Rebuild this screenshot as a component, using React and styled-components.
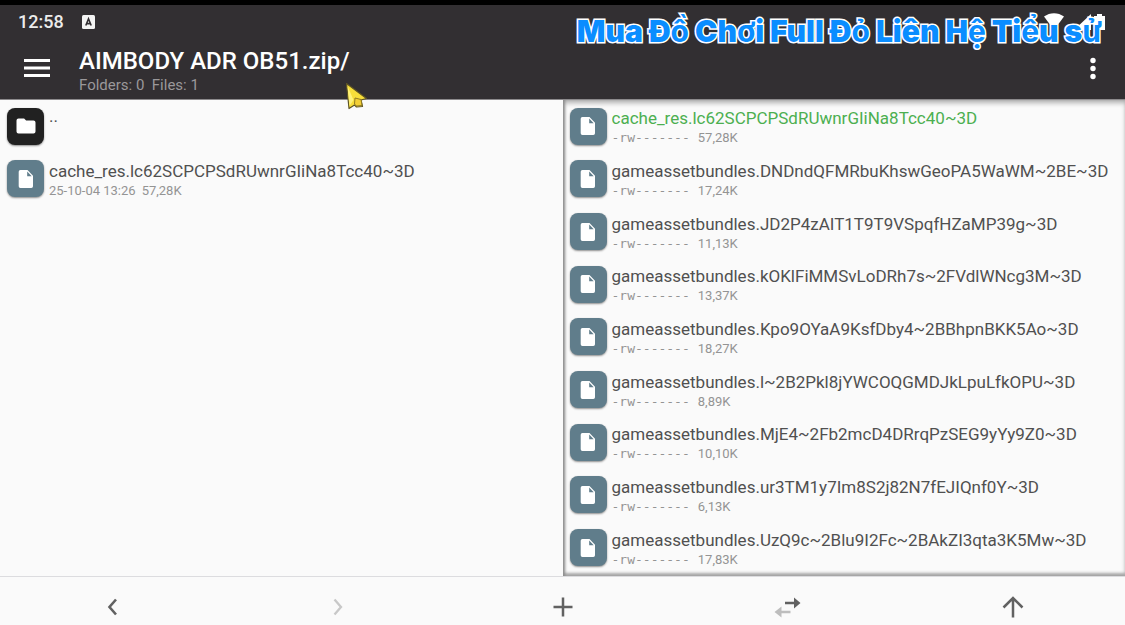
import React from 'react'
import styled, { createGlobalStyle } from 'styled-components'

const color = {
  bar: '#322f32',
  page: '#fafafa',
  text: '#505050',
  muted: '#949494',
  active: '#4caf50',
  file: '#607d8b',
  folder: '#212121',
  icon: '#616161',
  disabled: '#bdbdbd',
}

const GlobalStyle = createGlobalStyle`
  * {
    box-sizing: border-box;
  }

  body {
    margin: 0;
    background: ${color.page};
    font-family: Roboto, 'Noto Sans', sans-serif;
  }
`

const Screen = styled.div`
  display: flex;
  flex-direction: column;
  min-height: 100vh;
`

const Header = styled.header`
  position: relative;
  background: ${color.bar};
  border-top: 5px solid #000;
  color: #fff;
`

const StatusBar = styled.div`
  display: flex;
  align-items: center;
  justify-content: space-between;
  height: 34px;
  padding: 0 19px 0 18px;
`

const StatusGroup = styled.div`
  display: flex;
  align-items: center;
  gap: ${props => props.$gap}px;
`

const Clock = styled.time`
  font-size: 18px;
  font-weight: 500;
  line-height: 20px;
  color: #ececec;
`

const Toolbar = styled.div`
  display: flex;
  align-items: center;
  height: 60px;
  padding: 0 16px 2px 20px;
`

const IconButton = styled.button`
  display: flex;
  align-items: center;
  justify-content: center;
  padding: 0;
  border: 0;
  background: none;
  color: inherit;
  cursor: pointer;
`

const Heading = styled.div`
  flex: 1;
  min-width: 0;
  padding: 6px 0 0 25px;
`

const Title = styled.h1`
  margin: 0;
  font-size: 24px;
  font-weight: 500;
  line-height: 28px;
`

const Summary = styled.p`
  margin: 0;
  font-size: 15px;
  line-height: 20px;
  color: #9a989a;
  white-space: pre;
`

const Caption = styled.div`
  position: absolute;
  top: 8px;
  right: 23px;
  font-family: Inter, sans-serif;
  font-size: 30px;
  font-weight: 900;
  line-height: 36px;
  white-space: nowrap;
  color: #0a8dff;
  -webkit-text-stroke: 3px #fff;
  paint-order: stroke fill;
`

const Accent = styled.span`
  font-weight: 700;
`

const Pointer = styled.svg`
  position: absolute;
  top: 77px;
  left: 344px;
  z-index: 2;
`

const Panes = styled.main`
  display: grid;
  grid-template-columns: 1fr 1fr;
  flex: 1;
  border-top: 1px solid #8c8a8c;
  border-bottom: 1px solid #dcdcdf;
`

const Pane = styled.ul`
  display: grid;
  grid-template-rows: repeat(9, minmax(44px, 1fr));
  min-width: 0;
  margin: 0;
  padding: 0 7px 2px;
  list-style: none;
  box-shadow: ${props =>
    props.$focused
      ? 'inset 3px 0 3px -1px #8c8c8c, inset 0 4px 5px -1px #b0b0b0, inset 0 -4px 3px -1px #a8a8a8'
      : 'none'};
`

const Entry = styled.li`
  display: flex;
  align-items: center;
  gap: 5px;
  min-width: 0;
`

const Tile = styled.span`
  display: flex;
  flex: none;
  align-items: center;
  justify-content: center;
  width: 37px;
  height: 37px;
  border-radius: 8px;
  background: ${props => (props.$folder ? color.folder : color.file)};
  box-shadow: 0 1px 2px #8d8d8d;
  color: #fff;
`

const Info = styled.div`
  align-self: ${props => (props.$parent ? 'flex-start' : 'auto')};
  min-width: 0;
  padding-top: ${props => (props.$parent ? 4 : 0)}px;
`

const Name = styled.div`
  overflow: hidden;
  font-size: 17px;
  line-height: 24px;
  white-space: nowrap;
  text-overflow: ellipsis;
  color: ${props => (props.$active ? color.active : color.text)};
`

const Meta = styled.div`
  display: flex;
  gap: ${props => props.$gap}px;
  font-size: 13px;
  line-height: 16px;
  color: ${color.muted};
`

const Mode = styled.span`
  font-family: 'DejaVu Sans Mono', monospace;
`

const BottomBar = styled.nav`
  display: grid;
  grid-template-columns: repeat(5, 1fr);
  height: 48px;
`

const NavButton = styled(IconButton)`
  padding-top: 11px;
  color: ${color.icon};

  &:disabled {
    color: #c8c8c8;
    cursor: default;
  }
`

const left = [
  { name: '..', folder: true },
  { name: 'cache_res.lc62SCPCPSdRUwnrGIiNa8Tcc40~3D', date: '25-10-04 13:26', size: '57,28K' },
]

const right = [
  { name: 'cache_res.lc62SCPCPSdRUwnrGIiNa8Tcc40~3D', size: '57,28K', active: true },
  { name: 'gameassetbundles.DNDndQFMRbuKhswGeoPA5WaWM~2BE~3D', size: '17,24K' },
  { name: 'gameassetbundles.JD2P4zAIT1T9T9VSpqfHZaMP39g~3D', size: '11,13K' },
  { name: 'gameassetbundles.kOKlFiMMSvLoDRh7s~2FVdlWNcg3M~3D', size: '13,37K' },
  { name: 'gameassetbundles.Kpo9OYaA9KsfDby4~2BBhpnBKK5Ao~3D', size: '18,27K' },
  { name: 'gameassetbundles.l~2B2Pkl8jYWCOQGMDJkLpuLfkOPU~3D', size: '8,89K' },
  { name: 'gameassetbundles.MjE4~2Fb2mcD4DRrqPzSEG9yYy9Z0~3D', size: '10,10K' },
  { name: 'gameassetbundles.ur3TM1y7Im8S2j82N7fEJIQnf0Y~3D', size: '6,13K' },
  { name: 'gameassetbundles.UzQ9c~2Blu9I2Fc~2BAkZI3qta3K5Mw~3D', size: '17,83K' },
].map(file => ({ ...file, mode: '-rw-------' }))

const FolderIcon = () => (
  <svg width="20" height="16" viewBox="0 0 20 16" fill="currentColor">
    <path d="M2.5 0.5h5.6l2 2h7.4a2 2 0 0 1 2 2v9a2 2 0 0 1-2 2h-15a2 2 0 0 1-2-2v-11a2 2 0 0 1 2-2z" />
  </svg>
)

const FileIcon = () => (
  <svg width="16" height="20" viewBox="0 0 16 20" fill="currentColor">
    <path d="M2.4 1h7.1l5.5 5.7v10.6a1.7 1.7 0 0 1-1.7 1.7H2.4a1.7 1.7 0 0 1-1.7-1.7V2.7A1.7 1.7 0 0 1 2.4 1z" />
    <path d="M9.2 2.5v4.7h4.5z" fill={color.file} />
  </svg>
)

const FileList = ({ items, label, focused }) => (
  <Pane aria-label={label} $focused={focused}>
    {items.map(({ name, folder, mode, date, size, active }) => (
      <Entry key={name}>
        <Tile $folder={folder}>{folder ? <FolderIcon /> : <FileIcon />}</Tile>
        <Info $parent={folder}>
          <Name $active={active}>{name}</Name>
          {size && (
            <Meta $gap={mode ? 8 : 6}>
              {mode ? <Mode>{mode}</Mode> : <span>{date}</span>}
              <span>{size}</span>
            </Meta>
          )}
        </Info>
      </Entry>
    ))}
  </Pane>
)

const App = () => (
  <Screen>
    <GlobalStyle />
    <Header>
      <StatusBar>
        <StatusGroup $gap={18}>
          <Clock>12:58</Clock>
          <svg width="13" height="14" viewBox="0 0 13 14">
            <rect width="13" height="14" rx="1.5" fill="#f4f4f4" />
            <path d="M3.8 10.5L6.5 3.8l2.7 6.7M4.8 8.6h3.4" fill="none" stroke="#322f32" strokeWidth="1.6" />
          </svg>
        </StatusGroup>
        <StatusGroup $gap={8}>
          <svg width="20" height="18" viewBox="0 0 20 18" fill="#fff">
            <path d="M0 3.5C6-1 14-1 20 3.500L10 17z" />
          </svg>
          <svg width="34" height="18" viewBox="0 0 34 18" fill="#fff">
            <path d="M2 17L19 1v16zM22 3h3V1h5v2h3v14H22z" />
          </svg>
        </StatusGroup>
      </StatusBar>
      <Toolbar>
        <IconButton aria-label="Menu">
          <svg width="34" height="34" viewBox="0 0 34 34" fill="currentColor">
            <path d="M4 8h26v3H4zM4 15.500h26v3H4zM4 23h26v3H4z" />
          </svg>
        </IconButton>
        <Heading>
          <Title>AIMBODY ADR OB51.zip/</Title>
          <Summary>{'Folders: 0  Files: 1'}</Summary>
        </Heading>
        <IconButton aria-label="More options">
          <svg width="32" height="32" viewBox="0 0 32 32" fill="currentColor">
            <circle cx="16" cy="8.5" r="2.7" />
            <circle cx="16" cy="16.500" r="2.7" />
            <circle cx="16" cy="24.500" r="2.7" />
          </svg>
        </IconButton>
      </Toolbar>
      <Caption>
        {'Mua Đồ Chơi Full Đỏ Liên Hệ Tiểu sử'
          .split(/([ồơỏệểử])/)
          .map((part, index) => (index % 2 ? <Accent key={index}>{part}</Accent> : part))}
      </Caption>
      <Pointer width="26" height="30" viewBox="0 0 26 30">
        <path
          d="M2.500 1.500L22.500 16.500l-5.500 1.500 1.500 6.500-6 .5-2-2-5.500 3.500z"
          fill="#f7de3a"
          stroke="#5d5426"
          strokeWidth="1.200"
          strokeLinejoin="round"
        />
        <path d="M3.500 4l6 14-4 6z" fill="#fff27a" />
        <path d="M11 16l6 1.500 1 6-5.500.5-2-2z" fill="#f3cf35" stroke="#8f7a22" />
      </Pointer>
    </Header>
    <Panes>
      <FileList items={left} label="Left panel" />
      <FileList items={right} label="Right panel" focused />
    </Panes>
    <BottomBar>
      <NavButton aria-label="Back">
        <svg width="24" height="24" viewBox="0 0 24 24" fill="none" stroke="currentColor" strokeWidth="2.600">
          <path d="M15 4.500L8.500 12l6.500 7.500" />
        </svg>
      </NavButton>
      <NavButton aria-label="Forward" disabled>
        <svg width="24" height="24" viewBox="0 0 24 24" fill="none" stroke="currentColor" strokeWidth="2.300">
          <path d="M8.500 4.500L15 12l-6.500 7.500" />
        </svg>
      </NavButton>
      <NavButton aria-label="Create">
        <svg width="24" height="24" viewBox="0 0 24 24" fill="none" stroke="currentColor" strokeWidth="2.500">
          <path d="M12 2.500v19M2.500 12h19" />
        </svg>
      </NavButton>
      <NavButton aria-label="Swap panels">
        <svg width="28" height="24" viewBox="0 0 28 24" fill="currentColor">
          <path d="M11 6.700h9V2.500L26.500 8 20 13.500V9.300h-9z" />
          <path d="M16.500 15.700h-9v-4.200L.5 17l7 5.500v-4.200h9z" fill={color.disabled} />
        </svg>
      </NavButton>
      <NavButton aria-label="Up">
        <svg width="24" height="24" viewBox="0 0 24 24" fill="none" stroke="currentColor" strokeWidth="2.500">
          <path d="M12 22.500V3M2.500 12.500L12 3l9.500 9.500" />
        </svg>
      </NavButton>
    </BottomBar>
  </Screen>
)

export default App
